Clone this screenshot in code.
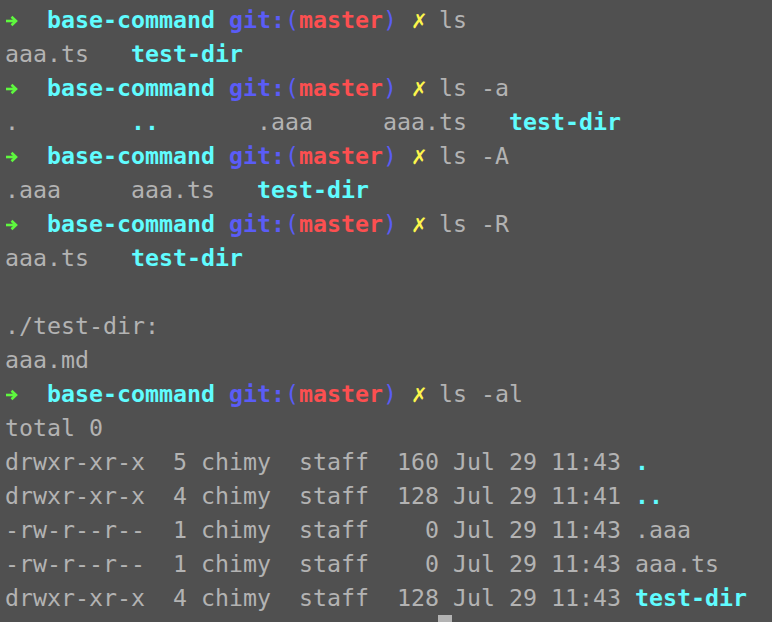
import type { ReactNode } from 'react';

const mono = "font-['DejaVu_Sans_Mono','Liberation_Mono',monospace]";

function Arrow() {
  return (
    <span className="inline-block w-[14px] align-middle">
      <svg width="14" height="12" viewBox="0 0 14 12" className="-mt-[1px]">
        <path d="M1 6h9" stroke="#5ef83e" strokeWidth="2.6" />
        <path d="M6.5 1.8 11 6l-4.5 4.2" fill="none" stroke="#5ef83e" strokeWidth="2.6" />
      </svg>
    </span>
  );
}

function Cross() {
  return (
    <span className="inline-block w-[14px] text-center font-['DejaVu_Sans',sans-serif] font-bold text-[20px] text-[#fdf64c]">
      ✗
    </span>
  );
}

function Prompt({ cmd }: { cmd: string }) {
  return (
    <>
      <Arrow />
      {'  '}
      <span className="font-bold text-[#60fcff]">base-command</span>{' '}
      <span className="font-bold text-[#5a5cf6]">git:</span>
      <span className="text-[#5a5cf6]">(</span>
      <span className="font-bold text-[#fc4f50]">master</span>
      <span className="text-[#5a5cf6]">)</span>{' '}
      <Cross /> {cmd}
    </>
  );
}

const Dir = ({ children }: { children: ReactNode }) => (
  <span className="font-bold text-[#60fcff]">{children}</span>
);

function Line({ children }: { children?: ReactNode }) {
  return <div className="h-[34px] leading-[34px] whitespace-pre">{children}</div>;
}

export default function App() {
  return (
    <div className={`w-[772px] h-[622px] overflow-hidden bg-[#505050] text-[#b3b3b3] pl-[5px] pt-[3px] text-[23.25px] ${mono}`}>
      <Line><Prompt cmd="ls" /></Line>
      <Line>aaa.ts   <Dir>test-dir</Dir></Line>
      <Line><Prompt cmd="ls -a" /></Line>
      <Line>.        <Dir>..</Dir>       .aaa     aaa.ts   <Dir>test-dir</Dir></Line>
      <Line><Prompt cmd="ls -A" /></Line>
      <Line>.aaa     aaa.ts   <Dir>test-dir</Dir></Line>
      <Line><Prompt cmd="ls -R" /></Line>
      <Line>aaa.ts   <Dir>test-dir</Dir></Line>
      <Line />
      <Line>./test-dir:</Line>
      <Line>aaa.md</Line>
      <Line><Prompt cmd="ls -al" /></Line>
      <Line>total 0</Line>
      <Line>drwxr-xr-x  5 chimy  staff  160 Jul 29 11:43 <Dir>.</Dir></Line>
      <Line>drwxr-xr-x  4 chimy  staff  128 Jul 29 11:41 <Dir>..</Dir></Line>
      <Line>-rw-r--r--  1 chimy  staff    0 Jul 29 11:43 .aaa</Line>
      <Line>-rw-r--r--  1 chimy  staff    0 Jul 29 11:43 aaa.ts</Line>
      <Line>drwxr-xr-x  4 chimy  staff  128 Jul 29 11:43 <Dir>test-dir</Dir></Line>
      <div className="h-[34px] pl-[433px]">
        <div className="w-[14px] h-[34px] bg-[#b3b3b3]" />
      </div>
    </div>
  );
}
